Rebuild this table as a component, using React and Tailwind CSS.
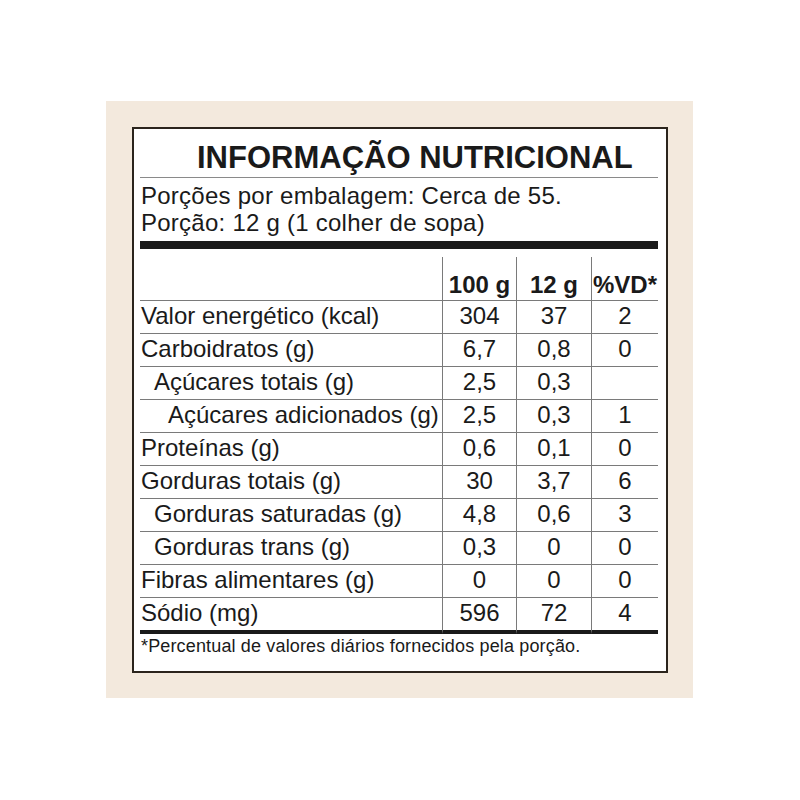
const ROWS = [
  { label: "Valor energético (kcal)", indent: 0, a: "304", b: "37", c: "2" },
  { label: "Carboidratos (g)", indent: 0, a: "6,7", b: "0,8", c: "0" },
  { label: "Açúcares totais (g)", indent: 1, a: "2,5", b: "0,3", c: "" },
  { label: "Açúcares adicionados (g)", indent: 2, a: "2,5", b: "0,3", c: "1" },
  { label: "Proteínas (g)", indent: 0, a: "0,6", b: "0,1", c: "0" },
  { label: "Gorduras totais (g)", indent: 0, a: "30", b: "3,7", c: "6" },
  { label: "Gorduras saturadas (g)", indent: 1, a: "4,8", b: "0,6", c: "3" },
  { label: "Gorduras trans (g)", indent: 1, a: "0,3", b: "0", c: "0" },
  { label: "Fibras alimentares (g)", indent: 0, a: "0", b: "0", c: "0" },
  { label: "Sódio (mg)", indent: 0, a: "596", b: "72", c: "4" },
];

const INDENT = ["pl-[1px]", "pl-[14px]", "pl-[28px]"];

function Row({ row, last }) {
  const line = last ? "h-[36px] border-b-4 border-[#1a1a1a]" : "h-[33px] border-b border-[#7a7a7a]";
  return (
    <>
      <div className={`${line} ${INDENT[row.indent]} leading-[30px]`}>{row.label}</div>
      <div className={`${line} border-l border-l-[#7a7a7a] text-center leading-[30px]`}>{row.a}</div>
      <div className={`${line} border-l border-l-[#7a7a7a] text-center leading-[30px]`}>{row.b}</div>
      <div className={`${line} border-l border-l-[#7a7a7a] text-center leading-[30px]`}>{row.c}</div>
    </>
  );
}

export default function App() {
  return (
    <div className="w-[800px] h-[800px] bg-white pt-[101px] pl-[106px] text-[#1a1a1a] font-['Liberation_Sans',Arial,sans-serif]">
      <div className="w-[587px] h-[597px] bg-[#f3e9dd] pt-[26px] pl-[26px]">
        <div className="w-[536px] h-[546px] bg-white border-2 border-[#2b241c] pl-[6px]">
          <div className="w-[518px]">
            <div className="h-[49px] border-b border-[#8a8a8a] pt-[10px] pl-[57px] text-[31px] leading-[38px] font-bold">
              INFORMAÇÃO NUTRICIONAL
            </div>
            <div className="pt-[4px] pb-[5px] pl-[1px] text-[24px] leading-[27px] tracking-[0.25px]">
              <p>Porções por embalagem: Cerca de 55.</p>
              <p>Porção: 12 g (1 colher de sopa)</p>
            </div>
            <div className="h-[8px] bg-[#1a1a1a]" />
            <div className="mt-[8px] grid grid-cols-[302px_74px_75px_67px] text-[24px]">
              <div className="h-[44px] border-b border-[#7a7a7a]" />
              <div className="h-[44px] border-b border-[#7a7a7a] border-l border-l-[#7a7a7a] flex items-end justify-center font-bold leading-[30px]">100 g</div>
              <div className="h-[44px] border-b border-[#7a7a7a] border-l border-l-[#7a7a7a] flex items-end justify-center font-bold leading-[30px]">12 g</div>
              <div className="h-[44px] border-b border-[#7a7a7a] border-l border-l-[#7a7a7a] flex items-end justify-center font-bold leading-[30px]">%VD*</div>
              {ROWS.map((row, i) => (
                <Row key={row.label} row={row} last={i === ROWS.length - 1} />
              ))}
            </div>
            <p className="mt-[2px] pl-[1px] text-[18px] leading-[20px] tracking-[0.15px]">*Percentual de valores diários fornecidos pela porção.</p>
          </div>
        </div>
      </div>
    </div>
  );
}
